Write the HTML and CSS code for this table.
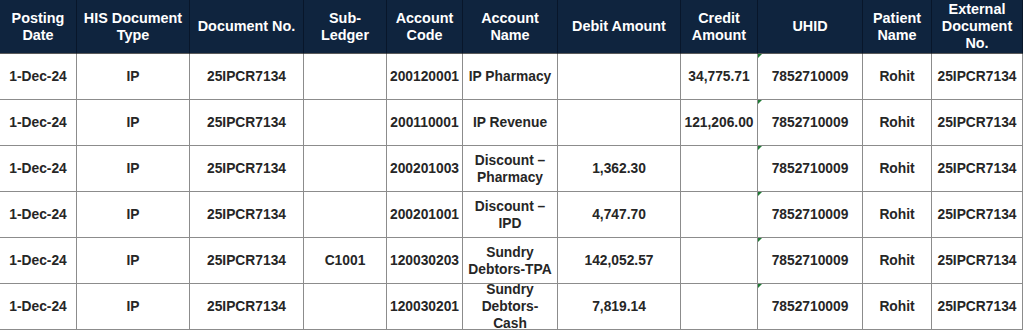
FILE: index.html
```
<!DOCTYPE html>
<html>
<head>
  <title>Journal Entries</title>
  <link rel="stylesheet" href="styles.css">
</head>
<body>
  <div class="sheet">
    <div class="cell head">Posting Date</div>
    <div class="cell head">HIS Document Type</div>
    <div class="cell head">Document No.</div>
    <div class="cell head">Sub-Ledger</div>
    <div class="cell head">Account Code</div>
    <div class="cell head">Account Name</div>
    <div class="cell head">Debit Amount</div>
    <div class="cell head">Credit Amount</div>
    <div class="cell head">UHID</div>
    <div class="cell head">Patient Name</div>
    <div class="cell head">External Document No.</div>

    <div class="cell">1-Dec-24</div>
    <div class="cell">IP</div>
    <div class="cell">25IPCR7134</div>
    <div class="cell"></div>
    <div class="cell num">200120001</div>
    <div class="cell">IP Pharmacy</div>
    <div class="cell num"></div>
    <div class="cell num">34,775.71</div>
    <div class="cell num uhid">7852710009</div>
    <div class="cell">Rohit</div>
    <div class="cell">25IPCR7134</div>

    <div class="cell">1-Dec-24</div>
    <div class="cell">IP</div>
    <div class="cell">25IPCR7134</div>
    <div class="cell"></div>
    <div class="cell num">200110001</div>
    <div class="cell">IP Revenue</div>
    <div class="cell num"></div>
    <div class="cell num">121,206.00</div>
    <div class="cell num uhid">7852710009</div>
    <div class="cell">Rohit</div>
    <div class="cell">25IPCR7134</div>

    <div class="cell">1-Dec-24</div>
    <div class="cell">IP</div>
    <div class="cell">25IPCR7134</div>
    <div class="cell"></div>
    <div class="cell num">200201003</div>
    <div class="cell">Discount – Pharmacy</div>
    <div class="cell num">1,362.30</div>
    <div class="cell num"></div>
    <div class="cell num uhid">7852710009</div>
    <div class="cell">Rohit</div>
    <div class="cell">25IPCR7134</div>

    <div class="cell">1-Dec-24</div>
    <div class="cell">IP</div>
    <div class="cell">25IPCR7134</div>
    <div class="cell"></div>
    <div class="cell num">200201001</div>
    <div class="cell">Discount – IPD</div>
    <div class="cell num">4,747.70</div>
    <div class="cell num"></div>
    <div class="cell num uhid">7852710009</div>
    <div class="cell">Rohit</div>
    <div class="cell">25IPCR7134</div>

    <div class="cell">1-Dec-24</div>
    <div class="cell">IP</div>
    <div class="cell">25IPCR7134</div>
    <div class="cell">C1001</div>
    <div class="cell num">120030203</div>
    <div class="cell">Sundry Debtors-TPA</div>
    <div class="cell num">142,052.57</div>
    <div class="cell num"></div>
    <div class="cell num uhid">7852710009</div>
    <div class="cell">Rohit</div>
    <div class="cell">25IPCR7134</div>

    <div class="cell">1-Dec-24</div>
    <div class="cell">IP</div>
    <div class="cell">25IPCR7134</div>
    <div class="cell"></div>
    <div class="cell num">120030201</div>
    <div class="cell">Sundry Debtors-Cash</div>
    <div class="cell num">7,819.14</div>
    <div class="cell num"></div>
    <div class="cell num uhid">7852710009</div>
    <div class="cell">Rohit</div>
    <div class="cell">25IPCR7134</div>
  </div>
</body>
</html>
```

FILE: styles.css
```
body {
  margin: 0;
  background: #FFFFFF;
  font-family: 'Liberation Sans', Arial, sans-serif;
  font-weight: 700;
  color: #262626;
}

.sheet {
  display: grid;
  grid-template-columns: 77px 113px 114px 83px 76px 95px 123px 77px 105px 69px 91px;
  grid-template-rows: 54px;
  grid-auto-rows: 46px;
  width: 1023px;
}

.cell {
  box-sizing: border-box;
  position: relative;
  display: flex;
  align-items: center;
  justify-content: center;
  text-align: center;
  padding: 0 3px;
  font-size: 13.8px;
  line-height: 17px;
  border-right: 1px solid #8c8c8c;
  border-bottom: 1px solid #8c8c8c;
  overflow: hidden;
}

.cell.num {
  white-space: nowrap;
  padding: 0 1px;
}

.head {
  background: #0F243E;
  color: #FFFFFF;
  font-size: 14.4px;
  border-right-color: #08162a;
  border-bottom-color: #5a5a5a;
}

/* Excel "number stored as text" marker */
.uhid::before {
  content: '';
  position: absolute;
  top: 0;
  left: 0;
  border-top: 4px solid #1f7a35;
  border-right: 4px solid transparent;
}
```
